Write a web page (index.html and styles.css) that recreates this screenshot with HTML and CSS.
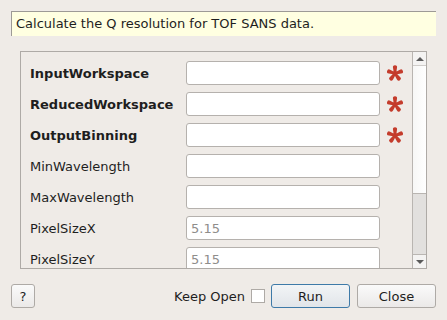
FILE: index.html
```html
<!DOCTYPE html>
<html lang="en">
  <head>
    <meta charset="UTF-8">
    <title>SANS Q Resolution</title>
    <link rel="stylesheet" href="styles.css">
  </head>
  <body>
    <svg width="0" height="0" class="defs">
      <defs>
        <path id="lobe" d="M6.9 8.5 L6 2.7 A2.05 2.05 0 1 1 10 2.7 L9.1 8.5 Z"/>
        <g id="star">
          <circle cx="8" cy="8.5" r="2.4"/>
          <use href="#lobe"/>
          <use href="#lobe" transform="rotate(72 8 8.5)"/>
          <use href="#lobe" transform="rotate(144 8 8.5)"/>
          <use href="#lobe" transform="rotate(216 8 8.5)"/>
          <use href="#lobe" transform="rotate(288 8 8.5)"/>
        </g>
      </defs>
    </svg>
    <div class="dialog">
      <div class="description">Calculate the Q resolution for TOF SANS data.</div>

      <div class="scroll-area">
        <div class="props">
          <label class="name mandatory">InputWorkspace</label>
          <input class="value" type="text">
          <svg class="star" width="16" height="16" viewBox="0 0 16 16"><use href="#star"/></svg>

          <label class="name mandatory">ReducedWorkspace</label>
          <input class="value" type="text">
          <svg class="star" width="16" height="16" viewBox="0 0 16 16"><use href="#star"/></svg>

          <label class="name mandatory">OutputBinning</label>
          <input class="value" type="text">
          <svg class="star" width="16" height="16" viewBox="0 0 16 16"><use href="#star"/></svg>

          <label class="name">MinWavelength</label>
          <input class="value" type="text">
          <span></span>

          <label class="name">MaxWavelength</label>
          <input class="value" type="text">
          <span></span>

          <label class="name">PixelSizeX</label>
          <input class="value" type="text" placeholder="5.15">
          <span></span>

          <label class="name">PixelSizeY</label>
          <input class="value" type="text" placeholder="5.15">
          <span></span>
        </div>
        <div class="scrollbar">
          <div class="arrow up"></div>
          <div class="handle"></div>
          <div class="trough"></div>
          <div class="arrow down"></div>
        </div>
      </div>

      <div class="buttons">
        <button class="btn help">?</button>
        <span class="spacer"></span>
        <label class="keep-open">Keep Open <span class="checkbox"></span></label>
        <button class="btn run">Run</button>
        <button class="btn">Close</button>
      </div>
    </div>
  </body>
</html>
```

FILE: styles.css
```css
body {
  margin: 0;
  background: #efebe7;
  font-family: "DejaVu Sans", sans-serif;
  font-size: 13px;
  color: #1e1e1e;
}

.defs {
  position: absolute;
}

.dialog {
  width: 447px;
  height: 320px;
  padding-top: 11px;
  box-sizing: border-box;
}

.description {
  margin-left: 11px;
  width: 425px;
  height: 25px;
  box-sizing: border-box;
  background: #ffffe1;
  border-top: 1px solid #9d9a96;
  border-left: 1px solid #9d9a96;
  padding-left: 4px;
  line-height: 23px;
  white-space: nowrap;
}

.scroll-area {
  margin: 15px 0 0 20px;
  width: 407px;
  height: 218px;
  box-sizing: border-box;
  border: 1px solid #aeaaa6;
  display: flex;
  overflow: hidden;
}

.props {
  flex: 1;
  display: grid;
  grid-template-columns: 156px 194px 32px;
  grid-auto-rows: 24px;
  row-gap: 7px;
  padding: 9px 0 0 9px;
  align-items: center;
}

.name {
  white-space: nowrap;
}

.mandatory {
  font-weight: bold;
}

.value {
  width: 194px;
  height: 24px;
  box-sizing: border-box;
  margin: 0;
  border: 1px solid #b5b1ad;
  border-radius: 3px;
  background: #ffffff;
  font-family: "DejaVu Sans", sans-serif;
  font-size: 13px;
  padding: 0 4px;
}

.value::placeholder {
  color: #8f8d8b;
}

.star {
  fill: #c43c2c;
  margin-left: 7px;
}

.scrollbar {
  width: 14px;
  border-left: 1px solid #b9b5b1;
  display: flex;
  flex-direction: column;
  background: #e2e0de;
}

.arrow {
  height: 13px;
  background: #f4f3f2;
  position: relative;
}

.arrow::after {
  content: "";
  position: absolute;
  left: 3px;
  top: 5px;
  border-left: 4px solid transparent;
  border-right: 4px solid transparent;
}

.up::after {
  border-bottom: 4px solid #5a5a5a;
}

.down {
  border-top: 1px solid #bab6b2;
}

.down::after {
  border-top: 4px solid #5a5a5a;
}

.handle {
  height: 127px;
  background: linear-gradient(to right, #f7f7f6, #ffffff);
  border-top: 1px solid #d0cdca;
  border-bottom: 1px solid #b9b5b1;
}

.trough {
  flex: 1;
}

.buttons {
  display: flex;
  align-items: center;
  margin-top: 15px;
  padding: 0 11px;
  height: 24px;
}

.spacer {
  flex: 1;
}

.btn {
  height: 24px;
  width: 79px;
  box-sizing: border-box;
  border: 1px solid #aeaaa6;
  border-radius: 3px;
  background: linear-gradient(#fafafa, #ebe9e8);
  font-family: "DejaVu Sans", sans-serif;
  font-size: 13px;
  color: #1e1e1e;
  padding: 0;
}

.help {
  width: 24px;
}

.run {
  margin: 0 7px 0 6px;
  border-color: #3e7aa8;
  background: linear-gradient(#f2f4f6, #e1e5e9);
}

.keep-open {
  display: flex;
  align-items: center;
  gap: 6px;
}

.checkbox {
  width: 14px;
  height: 14px;
  box-sizing: border-box;
  border: 1px solid #aeaaa6;
  background: #ffffff;
}
```
